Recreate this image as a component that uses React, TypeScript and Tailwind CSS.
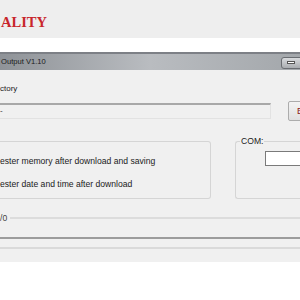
export default function App() {
  const ui = { fontFamily: '"Liberation Sans", Arial, sans-serif' };
  return (
    <div className="w-[300px] h-[300px] overflow-hidden bg-white" style={ui}>
      <div className="h-[38px] bg-[#eeeeee] pt-[10px] pl-[1px]">
        <span
          className="text-[14.5px] font-bold text-[#c8262c]"
          style={{ fontFamily: '"Liberation Serif", "Times New Roman", serif' }}
        >
          ALITY
        </span>
      </div>
      <div className="h-[14px] bg-white" />
      <div className="h-[18px] border-t-2 border-[#7d8086] bg-gradient-to-r from-[#8f9398] via-[#b9bcc0] to-[#a3a7ab] flex items-center justify-between">
        <span className="text-[7.6px] text-[#1b1b1b] pl-[1px] pb-[1px]">Output V1.10</span>
        <div className="shrink-0 w-[26px] h-[12px] mt-[1px] -mr-[7px] rounded-[3px] border border-[#6a6d72] bg-gradient-to-b from-[#d9dbde] to-[#a9acb0] flex items-center pl-[5px]">
          <div className="w-[8px] h-[3px] bg-white border border-[#555]" />
        </div>
      </div>
      <div className="h-[192px] bg-[#f0f0f0] flex flex-col">
        <div className="mt-[14px] h-[9px] text-[8px] leading-[9px] text-[#1b1b1b]">ctory</div>
        <div className="mt-[10px] flex items-start">
          <div className="shrink-0 w-[271px] h-[16px] border-t-2 border-r border-b border-t-[#a8a8a8] border-r-[#e2e2e2] border-b-[#e2e2e2] text-[8px] leading-[12px] text-[#333]">
            -
          </div>
          <div className="shrink-0 ml-[17px] -mt-[2px] w-[30px] h-[20px] border border-[#acacac] rounded-[2px] bg-gradient-to-b from-[#f4f4f4] to-[#e0e0e0] pl-[8px] text-[9px] leading-[18px] text-[#8b1a1a]">
            B
          </div>
        </div>
        <div className="mt-[20px] flex">
          <div className="shrink-0 w-[211px] h-[58px] border border-l-0 border-[#d5d5d5] rounded-r-[3px] flex flex-col pt-[14px] gap-[13px] text-[8.6px] leading-[10px] text-[#1b1b1b]">
            <span>ester memory after download and saving</span>
            <span>ester date and time after download</span>
          </div>
          <div className="shrink-0 ml-[24px] w-[80px] h-[58px] border border-r-0 border-[#d5d5d5] rounded-l-[3px] relative">
            <span className="absolute -top-[6px] left-[4px] px-[1px] bg-[#f0f0f0] text-[8.6px] leading-[10px] text-[#1b1b1b]">
              COM:
            </span>
            <div className="mt-[9px] ml-[29px] h-[15px] bg-white border border-[#7a7a7a] border-r-0" />
          </div>
        </div>
        <div className="mt-[14px] flex items-center h-[10px]">
          <span className="text-[8.6px] leading-[10px] text-[#444]">/0</span>
          <div className="ml-[3px] flex-1 h-[2px] bg-[#dcdcdc]" />
        </div>
        <div className="mt-[14px] h-[2px] bg-[#9c9c9c]" />
        <div className="mt-[8px] h-[2px] bg-[#dadada]" />
      </div>
    </div>
  );
}
